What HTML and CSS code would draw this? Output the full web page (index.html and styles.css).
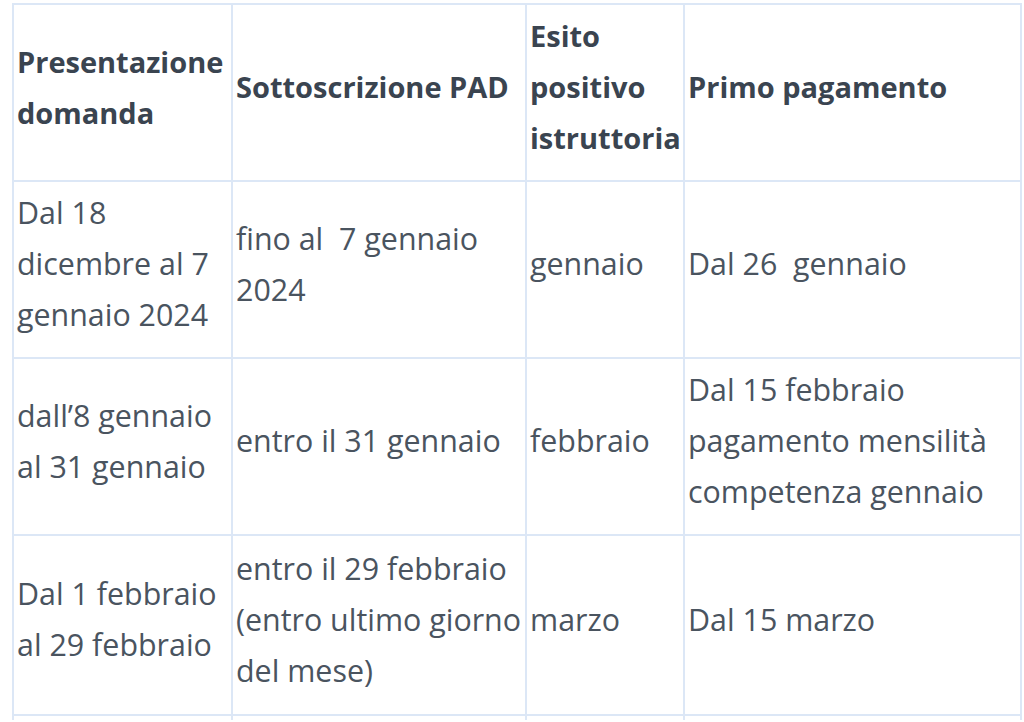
FILE: index.html
```html
<!DOCTYPE html>
<html lang="it">
<head>
<meta charset="utf-8">
<title>Tabella</title>
<link rel="stylesheet" href="styles.css">
</head>
<body>
<table class="calendar">
  <colgroup>
    <col class="c1"><col class="c2"><col class="c3"><col class="c4">
  </colgroup>
  <thead>
    <tr>
      <th>Presentazione<br>domanda</th>
      <th>Sottoscrizione PAD</th>
      <th>Esito<br>positivo<br>istruttoria</th>
      <th>Primo pagamento</th>
    </tr>
  </thead>
  <tbody>
    <tr>
      <td>Dal 18<br>dicembre al 7<br>gennaio 2024</td>
      <td>fino al&nbsp; 7 gennaio<br>2024</td>
      <td>gennaio</td>
      <td>Dal 26&nbsp; gennaio</td>
    </tr>
    <tr>
      <td>dall’8 gennaio<br>al 31 gennaio</td>
      <td>entro il 31 gennaio</td>
      <td>febbraio</td>
      <td>Dal 15 febbraio<br>pagamento mensilità<br>competenza gennaio</td>
    </tr>
    <tr class="last">
      <td>Dal 1 febbraio<br>al 29 febbraio</td>
      <td>entro il 29 febbraio<br>(entro ultimo giorno<br>del mese)</td>
      <td>marzo</td>
      <td>Dal 15 marzo</td>
    </tr>
    <tr class="next">
      <td></td><td></td><td></td><td></td>
    </tr>
  </tbody>
</table>
</body>
</html>
```

FILE: styles.css
```css
html, body {
  margin: 0;
  padding: 0;
  background: #ffffff;
}

body {
  padding: 3px 0 0 12px;
  overflow: hidden;
  height: 722px;
  box-sizing: border-box;
}

.calendar {
  border-collapse: collapse;
  table-layout: fixed;
  width: 1010px;
  font-family: "Open Sans", "Noto Sans", sans-serif;
  font-size: 30.4px;
  line-height: 51px;
  color: #4a545f;
}

.c1 { width: 219px; }
.c2 { width: 294px; }
.c3 { width: 158px; }
.c4 { width: 337px; }

.calendar th,
.calendar td {
  border: 2px solid #dce7f6;
  padding: 5px 3px 17px 3px;
  vertical-align: middle;
  text-align: left;
  height: 153px;
  white-space: nowrap;
}

.calendar th {
  font-size: 29px;
  font-weight: 700;
  color: #3a4450;
}

.calendar .last td {
  height: 156px;
}

.calendar .next td {
  height: 4px;
  padding: 0 3px;
  line-height: 4px;
  border-bottom: none;
}
```
